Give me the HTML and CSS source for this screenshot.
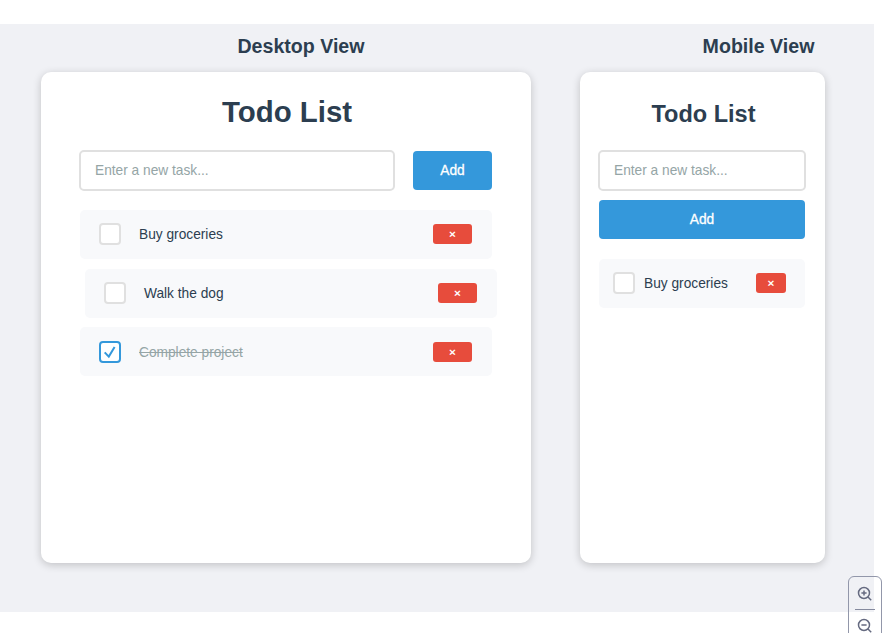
FILE: index.html
```html
<!DOCTYPE html>
<html lang="en">
<head>
<meta charset="utf-8">
<title>Todo List</title>
<link rel="stylesheet" href="styles.css">
</head>
<body>
<main class="board">
  <section class="view desktop">
    <h2 class="view-title">Desktop View</h2>
    <div class="card">
      <h1 class="title">Todo List</h1>
      <div class="form">
        <div class="input">Enter a new task...</div>
        <div class="add">Add</div>
      </div>
      <div class="list">
        <div class="item"><span class="box"></span><span class="text">Buy groceries</span><span class="delete">×</span></div>
        <div class="item shifted"><span class="box"></span><span class="text">Walk the dog</span><span class="delete">×</span></div>
        <div class="item done"><span class="box"><svg class="check" viewBox="0 0 18 18"><path d="M3.7 9.4 7.8 13.6 13.6 4"/></svg></span><span class="text">Complete project</span><span class="delete">×</span></div>
      </div>
    </div>
  </section>
  <section class="view mobile">
    <h2 class="view-title">Mobile View</h2>
    <div class="card">
      <h1 class="title">Todo List</h1>
      <div class="form">
        <div class="input">Enter a new task...</div>
        <div class="add">Add</div>
      </div>
      <div class="list">
        <div class="item"><span class="box"></span><span class="text">Buy groceries</span><span class="delete">×</span></div>
      </div>
    </div>
  </section>
</main>
<div class="zoom">
  <svg class="zoom-icon" viewBox="0 0 16 16"><circle cx="7" cy="7" r="5.5"/><path d="M11 11 14.2 14.2M4.4 7H9.6M7 4.4V9.6"/></svg>
  <span class="divider"></span>
  <svg class="zoom-icon" viewBox="0 0 16 16"><circle cx="7" cy="7" r="5.5"/><path d="M11 11 14.2 14.2M4.4 7H9.6"/></svg>
</div>
</body>
</html>
```

FILE: styles.css
```css
* { box-sizing: border-box; }
html { height: 100%; overflow: hidden; }
body {
  margin: 0;
  padding-top: 24px;
  height: 100%;
  overflow: hidden;
  position: relative;
  background: #fff;
  color: #2c3e50;
  font-family: "Liberation Sans", Arial, sans-serif;
  font-size: 13.72px;
}
h1, h2 { margin: 0; text-align: center; font-weight: bold; white-space: nowrap; }
.board {
  display: flex;
  gap: 49px;
  width: 874px;
  height: 587.5px;
  padding-left: 41px;
  background: #f0f1f5;
}
.desktop { width: 490px; }
.mobile { width: 245px; }
.view-title { height: 48.4px; line-height: 44px; font-size: 19.6px; }
.desktop .view-title { padding-left: 30px; }
.mobile .view-title { padding-left: 112px; }
.card {
  height: 490.4px;
  border-radius: 10px;
  background: #fff;
  box-shadow: 0 2px 8px rgba(0, 0, 0, .2);
}
.desktop .card { padding: 0 39px; }
.mobile .card { padding: 0 19px; }
.title { height: 77.6px; line-height: 79px; font-size: 29.4px; }
.desktop .title { padding-left: 2px; }
.mobile .title { line-height: 85px; font-size: 23.52px; padding-left: 2px; }
.form { display: flex; gap: 18px; align-items: center; }
.mobile .form { flex-direction: column; gap: 9px; align-items: stretch; }
.input {
  width: 316px;
  height: 41px;
  margin-left: -1px;
  padding-left: 14px;
  border: 2px solid #e0e0e0;
  border-radius: 5px;
  line-height: 37px;
  color: #95a5a6;
}
.mobile .input { width: 208px; }
.add {
  width: 79px;
  height: 39px;
  border-radius: 4px;
  background: #3498db;
  color: #fff;
  text-align: center;
  line-height: 39.5px;
  -webkit-text-stroke: .3px #fff;
}
.mobile .add { width: 206px; }
.list { display: grid; gap: 9.8px; margin-top: 18.8px; }
.mobile .list { margin-top: 20px; width: 206px; }
.item {
  display: flex;
  align-items: center;
  height: 49px;
  padding: 0 20px 0 18px;
  border-radius: 5px;
  background: #f8f9fb;
}
.shifted { margin: 0 -5px 0 5px; }
.mobile .item { padding: 0 19px 0 13px; }
.box {
  width: 22px;
  height: 22px;
  margin-left: 1px;
  border: 2px solid #e0e0e0;
  border-radius: 4px;
  background: #fff;
}
.text { flex: 1; margin-left: 18px; padding-top: 2px; line-height: 16px; }
.mobile .text { margin-left: 9px; }
.delete {
  width: 39px;
  height: 20px;
  border-radius: 3px;
  background: #e74c3c;
  color: #fff;
  font-size: 11.76px;
  font-weight: bold;
  line-height: 20px;
  text-align: center;
}
.mobile .delete { width: 30px; }
.done .box { border-color: #3498db; }
.done .text { color: #95a5a6; text-decoration: line-through; }
.check { display: block; width: 18px; height: 18px; fill: none; stroke: #3498db; stroke-width: 2; }
.zoom {
  position: absolute;
  left: 848px;
  top: 576px;
  width: 34px;
  height: 68px;
  display: flex;
  flex-direction: column;
  align-items: center;
  padding-top: 8.5px;
  border: 1px solid #9297aa;
  border-radius: 6px;
}
.zoom-icon { width: 16px; height: 16px; flex: none; fill: none; stroke: #656a80; stroke-width: 1.5; }
.divider { flex: none; width: 20px; height: 1px; margin: 7.5px 0 8px; background: #858a9e; }
```
